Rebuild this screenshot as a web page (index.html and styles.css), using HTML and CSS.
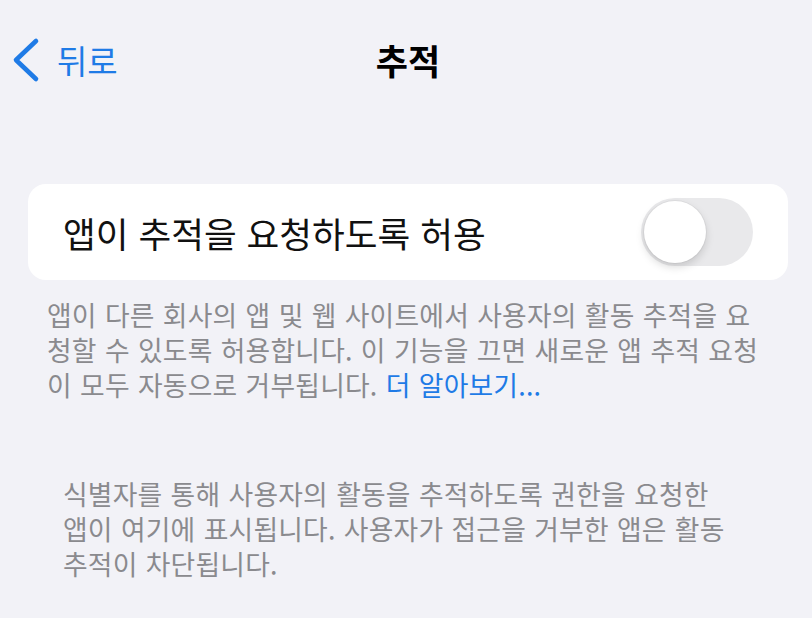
FILE: index.html
```html
<!DOCTYPE html>
<html lang="ko">
<head>
    <meta charset="UTF-8">
    <meta name="viewport" content="width=device-width, initial-scale=1.0">
    <title>추적</title>
    <link rel="stylesheet" href="styles.css">
</head>
<body>
    <header class="nav">
        <a class="back" href="#">
            <svg class="chevron" width="28" height="46" viewBox="0 0 28 46">
                <polyline points="24,4 4,23 24,42" fill="none" stroke="currentColor" stroke-width="4.6" stroke-linecap="round" stroke-linejoin="round"/>
            </svg>
            <span>뒤로</span>
        </a>
        <h1 class="title">추적</h1>
        <div></div>
    </header>

    <section class="group">
        <div class="cell">
            <span class="cell-label">앱이 추적을 요청하도록 허용</span>
            <div class="switch"><div class="knob"></div></div>
        </div>
    </section>
    <p class="footer">앱이 다른 회사의 앱 및 웹 사이트에서 사용자의 활동 추적을 요청할 수 있도록 허용합니다. 이 기능을 끄면 새로운 앱 추적 요청이 모두 자동으로 거부됩니다. <a href="#" class="more">더 알아보기...</a></p>

    <p class="footer empty">식별자를 통해 사용자의 활동을 추적하도록 권한을 요청한 앱이 여기에 표시됩니다. 사용자가 접근을 거부한 앱은 활동 추적이 차단됩니다.</p>
</body>
</html>
```

FILE: styles.css
```css
html, body {
    margin: 0;
    padding: 0;
    box-sizing: border-box;
    font-family: "Noto Sans CJK KR", "Noto Sans", sans-serif;
}

body {
    background-color: #f2f2f7;
    color: #111;
    height: 618px;
    overflow: hidden;
}

.nav {
    display: grid;
    grid-template-columns: 1fr auto 1fr;
    align-items: center;
    height: 44px;
    padding: 34px 12px 0 12px;
}

.back {
    display: flex;
    align-items: center;
    gap: 17px;
    color: #1f7be6;
    text-decoration: none;
    font-size: 33px;
}

.chevron {
    display: block;
}

.title {
    margin: 0;
    font-size: 35px;
    font-weight: bold;
    color: #000;
    padding-left: 4px;
}

.group {
    margin: 106px 24px 0 28px;
}

.cell {
    display: flex;
    align-items: center;
    justify-content: space-between;
    height: 96px;
    padding: 0 35px;
    background: #fff;
    border-radius: 18px;
}

.cell-label {
    font-size: 35.6px;
}

.switch {
    width: 112px;
    height: 68px;
    border-radius: 34px;
    background: #e9e9eb;
    padding: 3px;
    box-sizing: border-box;
}

.knob {
    width: 62px;
    height: 62px;
    border-radius: 50%;
    background: #fff;
    box-shadow: 0 4px 9px rgba(0, 0, 0, 0.15), 0 0 0 1px rgba(0, 0, 0, 0.04);
}

.footer {
    margin: 17px 50px 0 47px;
    font-size: 26.8px;
    line-height: 35px;
    letter-spacing: 0.2px;
    word-spacing: 0.5px;
    color: #8a8a8e;
    word-break: break-all;
}

.more {
    color: #1f7be6;
    text-decoration: none;
}

.empty {
    margin: 74px 82px 0 63px;
}
```
